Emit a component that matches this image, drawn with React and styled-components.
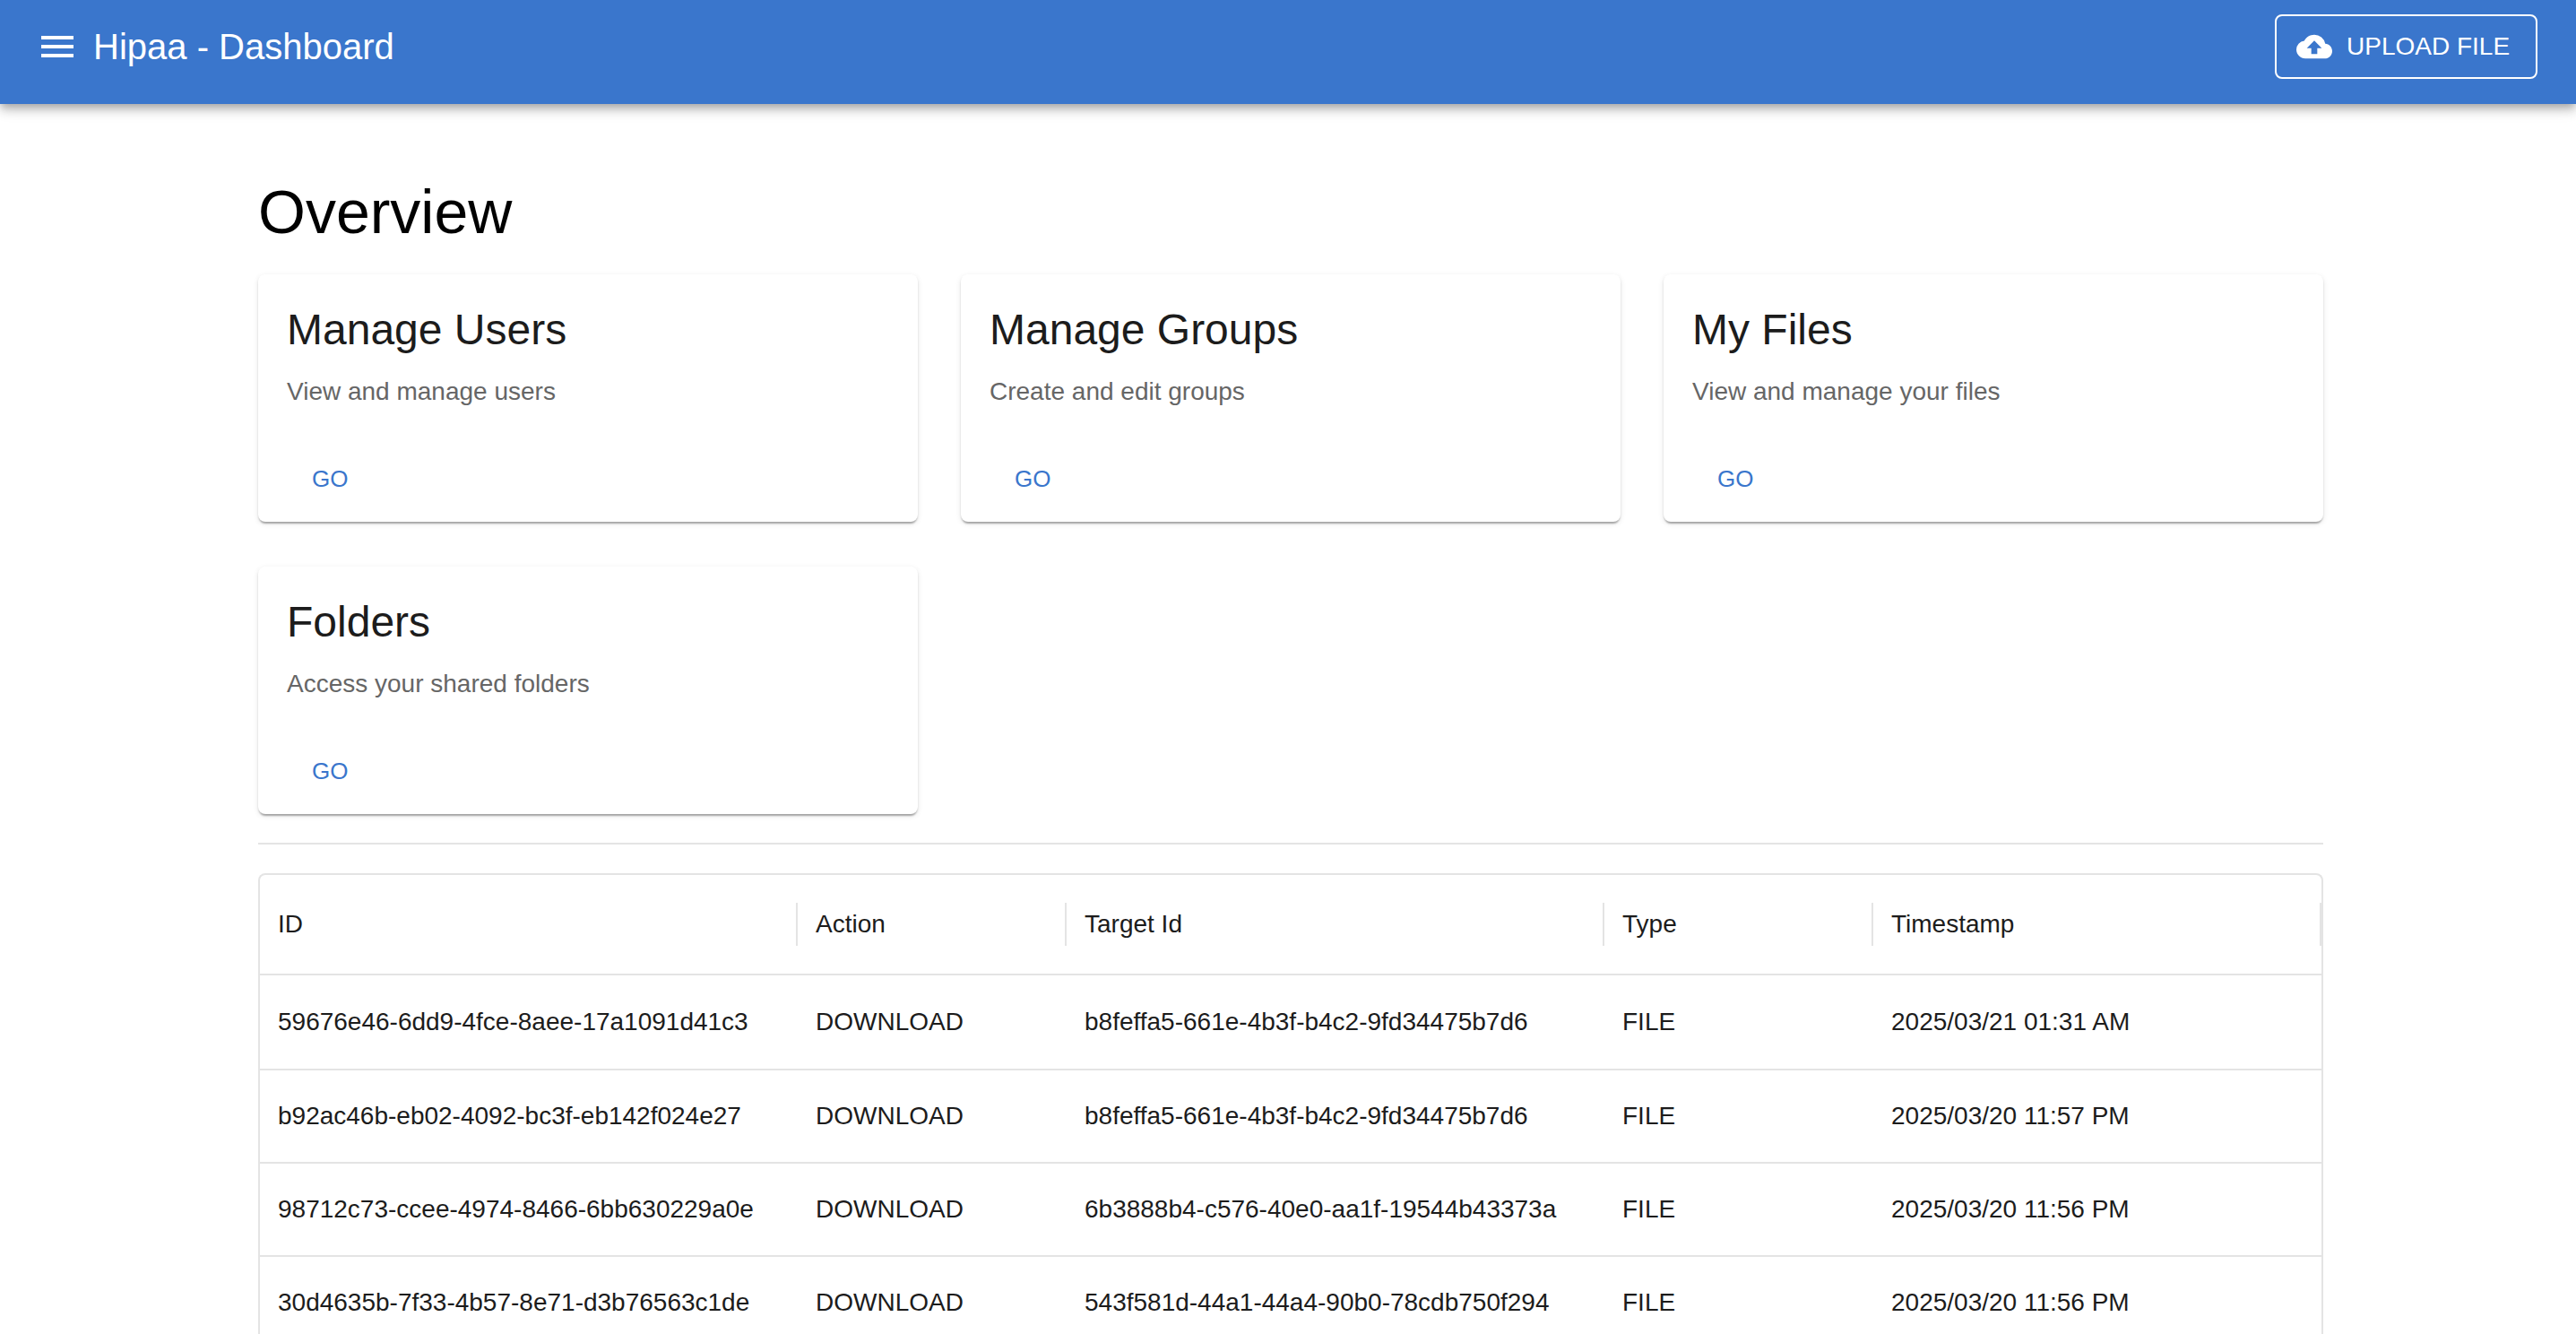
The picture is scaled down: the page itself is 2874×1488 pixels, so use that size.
import React from 'react'
import styled, { createGlobalStyle } from 'styled-components'
import { MdMenu, MdCloudUpload } from 'react-icons/md'

const cards = [
    { title: 'Manage Users', text: 'View and manage users' },
    { title: 'Manage Groups', text: 'Create and edit groups' },
    { title: 'My Files', text: 'View and manage your files' },
    { title: 'Folders', text: 'Access your shared folders' },
]

const rows = [
    ['59676e46-6dd9-4fce-8aee-17a1091d41c3', 'DOWNLOAD', 'b8feffa5-661e-4b3f-b4c2-9fd34475b7d6', 'FILE', '2025/03/21 01:31 AM'],
    ['b92ac46b-eb02-4092-bc3f-eb142f024e27', 'DOWNLOAD', 'b8feffa5-661e-4b3f-b4c2-9fd34475b7d6', 'FILE', '2025/03/20 11:57 PM'],
    ['98712c73-ccee-4974-8466-6bb630229a0e', 'DOWNLOAD', '6b3888b4-c576-40e0-aa1f-19544b43373a', 'FILE', '2025/03/20 11:56 PM'],
    ['30d4635b-7f33-4b57-8e71-d3b76563c1de', 'DOWNLOAD', '543f581d-44a1-44a4-90b0-78cdb750f294', 'FILE', '2025/03/20 11:56 PM'],
]

const columns = ['ID', 'Action', 'Target Id', 'Type', 'Timestamp']

function App() {
    return (
        <Page>
            <GlobalStyle />
            <Header>
                <HeaderLeft>
                    <MenuButton>
                        <MdMenu size={48} />
                    </MenuButton>
                    <Title>Hipaa - Dashboard</Title>
                </HeaderLeft>
                <UploadButton>
                    <MdCloudUpload size={40} />
                    UPLOAD FILE
                </UploadButton>
            </Header>
            <Main>
                <Heading>Overview</Heading>
                <CardGrid>
                    {cards.map((card) => (
                        <Card key={card.title}>
                            <CardTitle>{card.title}</CardTitle>
                            <CardText>{card.text}</CardText>
                            <GoButton>GO</GoButton>
                        </Card>
                    ))}
                </CardGrid>
                <Divider />
                <Table>
                    <HeadRow>
                        {columns.map((column) => (
                            <HeadCell key={column}>{column}</HeadCell>
                        ))}
                    </HeadRow>
                    {rows.map((row) => (
                        <Row key={row[0]}>
                            {row.map((value, i) => (
                                <Cell key={i}>{value}</Cell>
                            ))}
                        </Row>
                    ))}
                </Table>
            </Main>
        </Page>
    )
}

const GlobalStyle = createGlobalStyle`
    html, body {
        margin: 0;
        padding: 0;
        background: #fff;
        font-family: "Liberation Sans", Arial, sans-serif;
    }
`

const Page = styled.div`
    height: 100vh;
    overflow: hidden;
`

const Header = styled.header`
    display: flex;
    align-items: flex-start;
    justify-content: space-between;
    box-sizing: border-box;
    height: 116px;
    padding: 16px 43px 0 40px;
    background: #3a76cc;
    color: #fff;
    box-shadow: 0 4px 8px -2px rgba(0, 0, 0, 0.2), 0 8px 10px 0 rgba(0, 0, 0, 0.14), 0 2px 20px 0 rgba(0, 0, 0, 0.12);
    position: relative;
`

const HeaderLeft = styled.div`
    display: flex;
    align-items: center;
    height: 72px;
`

const MenuButton = styled.div`
    display: flex;
    width: 48px;
    height: 48px;
    margin-right: 16px;
`

const Title = styled.div`
    font-size: 40px;
    line-height: 48px;
`

const UploadButton = styled.button`
    display: flex;
    align-items: center;
    gap: 16px;
    box-sizing: border-box;
    width: 293px;
    height: 72px;
    padding: 0 22px;
    border: 2px solid #fff;
    border-radius: 8px;
    background: transparent;
    color: #fff;
    font-family: inherit;
    font-size: 28px;
    white-space: nowrap;
`

const Main = styled.main`
    width: 2304px;
    margin-left: 288px;
`

const Heading = styled.h1`
    margin: 0;
    padding-top: 80px;
    height: 110px;
    font-size: 68px;
    line-height: 80px;
    font-weight: 400;
    color: #000;
`

const CardGrid = styled.div`
    display: grid;
    grid-template-columns: repeat(3, 736px);
    gap: 50px 48px;
`

const Card = styled.div`
    display: flex;
    flex-direction: column;
    align-items: flex-start;
    box-sizing: border-box;
    height: 276px;
    padding: 34px 32px 0;
    border-radius: 8px;
    background: #fff;
    box-shadow: 0 4px 2px -2px rgba(0, 0, 0, 0.2), 0 2px 2px 0 rgba(0, 0, 0, 0.14), 0 2px 6px 0 rgba(0, 0, 0, 0.1);
`

const CardTitle = styled.div`
    font-size: 48px;
    line-height: 56px;
    color: #1c1c1c;
`

const CardText = styled.div`
    margin-top: 21px;
    font-size: 28px;
    line-height: 40px;
    color: #666;
`

const GoButton = styled.button`
    margin-top: 47px;
    padding: 0 28px;
    height: 60px;
    border: none;
    background: transparent;
    color: #3a76cc;
    font-family: inherit;
    font-size: 26px;
`

const Divider = styled.hr`
    margin: 32px 0 32px;
    height: 2px;
    border: none;
    background: #e4e4e4;
`

const Table = styled.div`
    box-sizing: border-box;
    border: 2px solid #e4e4e4;
    border-bottom: none;
    border-radius: 8px 8px 0 0;
    font-size: 28px;
    color: #1c1c1c;
`

const HeadRow = styled.div`
    display: grid;
    grid-template-columns: 600px 300px 600px 300px 1fr;
    height: 110px;
    align-items: center;
    border-bottom: 2px solid #e4e4e4;
`

const HeadCell = styled.div`
    display: flex;
    align-items: center;
    box-sizing: border-box;
    height: 48px;
    padding-left: 20px;
    border-right: 2px solid #e4e4e4;
`

const Row = styled.div`
    display: grid;
    grid-template-columns: 600px 300px 600px 300px 1fr;
    box-sizing: border-box;
    height: 104px;
    align-items: center;
    border-bottom: 2px solid #e4e4e4;

    &:nth-child(2) {
        height: 106px;
    }
`

const Cell = styled.div`
    padding-left: 20px;
    white-space: nowrap;
`

export default App
